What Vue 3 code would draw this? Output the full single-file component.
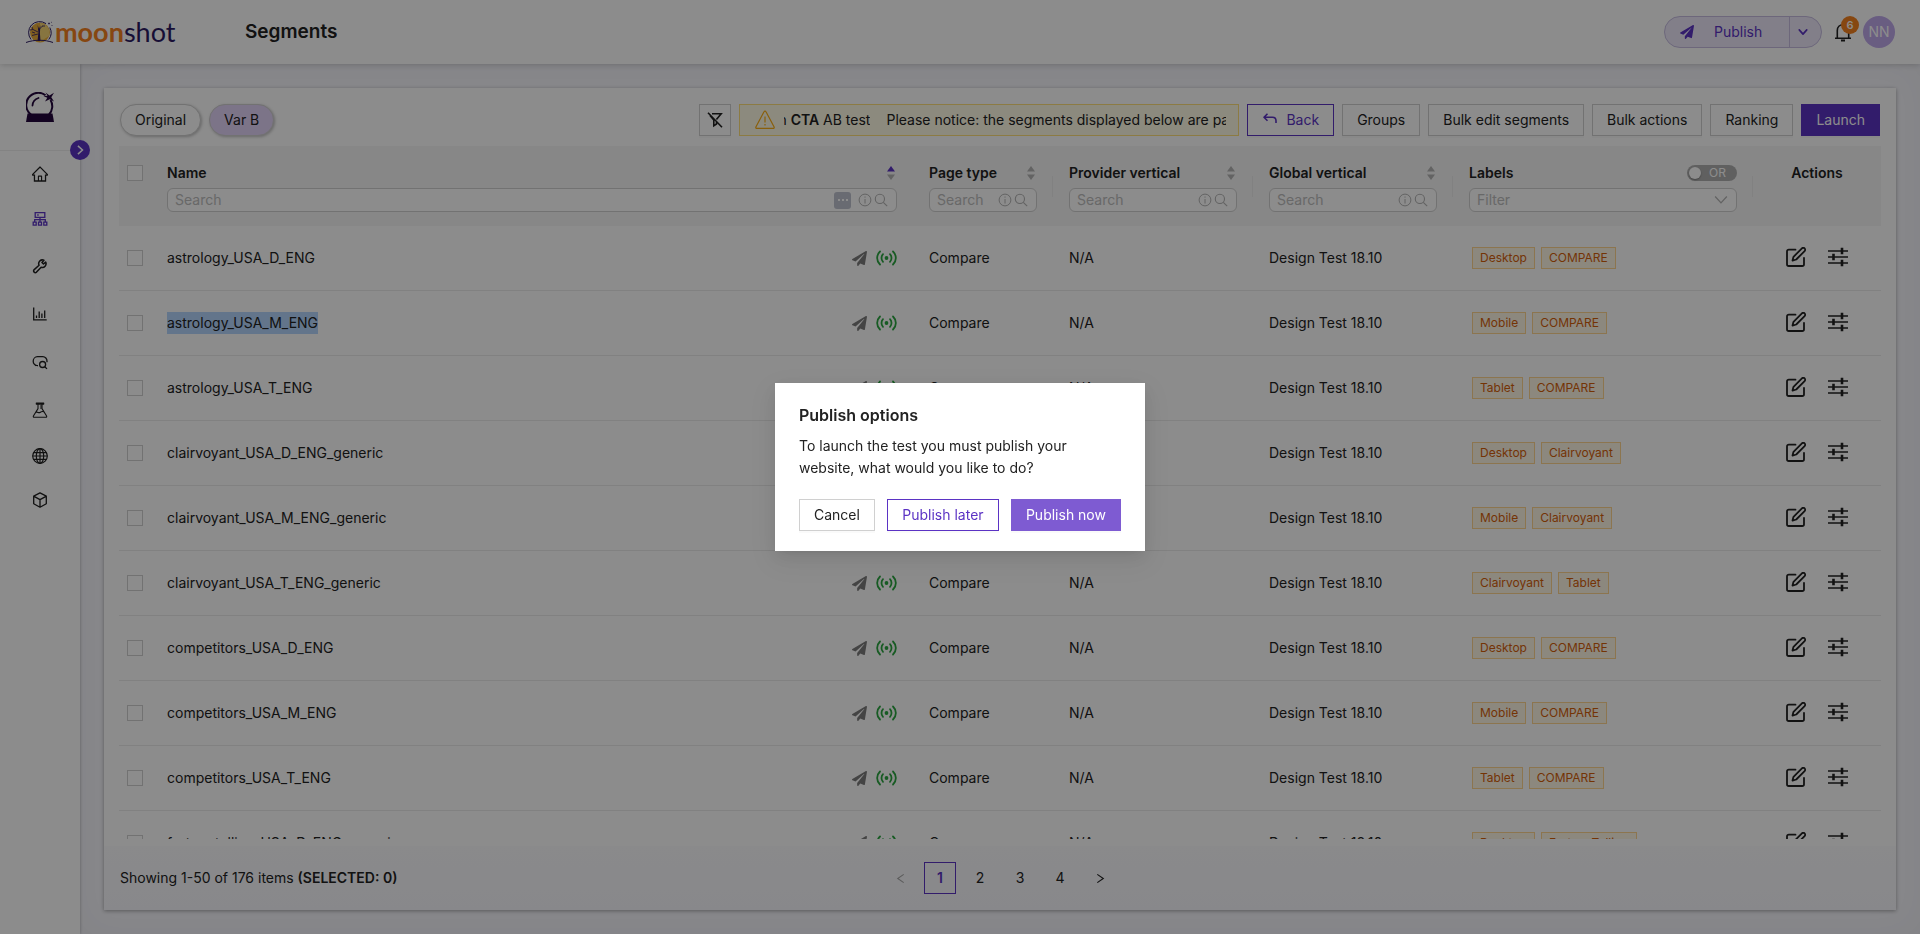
<script setup>
import { ref } from 'vue'

const navItems = [
  { icon: 'home', label: 'Home', cls: 'short' },
  { icon: 'sitemap', label: 'Segments', cls: 'short active' },
  { icon: 'wrench', label: 'Tools', cls: '' },
  { icon: 'chart', label: 'Reports', cls: '' },
  { icon: 'query', label: 'Queries', cls: '' },
  { icon: 'flask', label: 'Experiments', cls: '' },
  { icon: 'globe', label: 'Sites', cls: 'short' },
  { icon: 'cube', label: 'Products', cls: 'short' }
]

const searchColumns = [
  { key: 'name', title: 'Name', sorted: true },
  { key: 'page', title: 'Page type' },
  { key: 'provider', title: 'Provider vertical' },
  { key: 'global', title: 'Global vertical' }
]

const rows = [
  { name: 'astrology_USA_D_ENG', tags: ['Desktop', 'COMPARE'] },
  { name: 'astrology_USA_M_ENG', tags: ['Mobile', 'COMPARE'], highlighted: true },
  { name: 'astrology_USA_T_ENG', tags: ['Tablet', 'COMPARE'] },
  { name: 'clairvoyant_USA_D_ENG_generic', tags: ['Desktop', 'Clairvoyant'] },
  { name: 'clairvoyant_USA_M_ENG_generic', tags: ['Mobile', 'Clairvoyant'] },
  { name: 'clairvoyant_USA_T_ENG_generic', tags: ['Clairvoyant', 'Tablet'] },
  { name: 'competitors_USA_D_ENG', tags: ['Desktop', 'COMPARE'] },
  { name: 'competitors_USA_M_ENG', tags: ['Mobile', 'COMPARE'] },
  { name: 'competitors_USA_T_ENG', tags: ['Tablet', 'COMPARE'] },
  { name: 'fortunetelling_USA_D_ENG_generic', tags: ['Desktop', 'FortuneTelling'] }
]

const bulkButtons = ['Groups', 'Bulk edit segments', 'Bulk actions', 'Ranking']
const pages = [1, 2, 3, 4]
const current = ref(1)
</script>

<template>
  <div class="app">
    <svg class="sprite" aria-hidden="true">
      <symbol id="home" viewBox="64 64 896 896"><path fill="currentColor" d="M946.5 505L560.1 118.8l-25.9-25.9a31.5 31.5 0 00-44.4 0L77.5 505a63.9 63.9 0 00-18.8 46c.4 35.2 29.7 63.3 64.9 63.3h42.5V940h691.8V614.3h43.4c17.1 0 33.2-6.7 45.3-18.8a63.6 63.6 0 0018.7-45.3c0-17-6.7-33.1-18.8-45.2zM568 868H456V664h112v204zm217.9-325.7V868H632V640c0-22.1-17.9-40-40-40H432c-22.1 0-40 17.9-40 40v228H238.1V542.3h-96l370-369.7 23.1 23.1L882 542.3h-96.1z" /></symbol>
      <symbol id="sitemap" viewBox="0 0 16 16"><g fill="none" stroke="currentColor" stroke-width="1.3"><path d="M3.2 1.7h9.600v4.600H3.200zM8 6.300v4.400M2.700 11V8.700h10.600V11M1.200 11.200h3v3h-3zM6.500 11.200h3v3h-3zM11.800 11.200h3v3h-3zM5.200 4h1.500" /></g></symbol>
      <symbol id="wrench" viewBox="0 0 24 24"><path fill="none" stroke="currentColor" stroke-width="2.300" stroke-linejoin="round" d="M20.500 6.200l-3.300 2.800-2.200-2.200 2.900-3.400a5.600 5.600 0 0 0-7.300 7.500l-7.700 7a2.600 2.600 0 0 0 3.600 3.600l7.200-7.600a5.600 5.600 0 0 0 6.800-7.700z" /></symbol>
      <symbol id="chart" viewBox="0 0 16 16"><path fill="none" stroke="currentColor" stroke-width="1.300" d="M1.700 1.500v12.300h13M4.500 12V9.500M7.200 12V5.500M9.900 12V7.500M12.700 12V4.500" /></symbol>
      <symbol id="query" viewBox="0 0 16 16"><g fill="none" stroke="currentColor" stroke-width="1.300"><path d="M6 11.600H5.500A4.200 4.200 0 0 1 1.200 7.300 4.500 4.500 0 0 1 5.500 2.700h5.300a4.300 4.300 0 0 1 4.200 4.500v1M2.500 10.300l1.500 1.500" /><circle cx="10.600" cy="10.500" r="3" /><path d="M12.800 12.700l2.200 2.200" /></g></symbol>
      <symbol id="flask" viewBox="0 0 16 16"><g fill="none" stroke="currentColor" stroke-width="1.100" stroke-linejoin="round"><path d="M4.300 1h7.400v1.100H4.300zM6 2.400v4.200L1.400 14c-.3.700 0 1.200.700 1.200h11.800c.7 0 1-.5.700-1.200L10 6.600V2.400M4 10.400c1.500-1 2.500.9 4 .1 1.200-.9 2.500-1.200 3.700-.8M8 4h1.800M8 6h1.800" /></g></symbol>
      <symbol id="globe" viewBox="0 0 16 16"><g fill="none" stroke="currentColor" stroke-width="1.200"><circle cx="8" cy="8" r="7.300" /><ellipse cx="8" cy="8" rx="3.700" ry="7.300" /><path d="M8 .7v14.600M.7 8h14.600M1.600 4.600h12.800M1.600 11.400h12.800" /></g></symbol>
      <symbol id="cube" viewBox="0 0 16 16"><path fill="none" stroke="currentColor" stroke-width="1.300" stroke-linejoin="round" d="M8 .9l6.300 3.300v7.600L8 15.200l-6.300-3.400V4.200zM2 4.400l6 3.200 6-3.200M8 7.600v7.400" /></symbol>
      <symbol id="plane" viewBox="0 0 512 512"><path fill="currentColor" d="M476 3.200L12.500 270.600c-18.100 10.400-15.800 35.600 2.200 43.200L121 358.400l287.300-253.200c5.500-4.900 13.300 2.600 8.600 8.300L176 407v80.500c0 23.600 28.500 32.900 42.500 15.800L282 426l124.600 52.200c14.200 6 30.400-2.900 33-18.200l72-432C515 7.800 493.300-6.800 476 3.200z" /></symbol>
      <symbol id="live" viewBox="0 0 21 16"><g fill="none" stroke="currentColor" stroke-width="1.800" stroke-linecap="round"><path d="M4 1.500C.2 5.200.2 10.800 4 14.500M17 1.500c3.800 3.700 3.800 9.300 0 13M7 4.200C5 6.200 5 9.800 7 11.800M14 4.200c2 2 2 5.600 0 7.600" /></g><circle cx="10.500" cy="8" r="1.900" fill="currentColor" /></symbol>
      <symbol id="down" viewBox="0 0 12 12"><path fill="none" stroke="currentColor" stroke-width="1.100" d="M1 3l5 5.500L11 3" /></symbol>
      <symbol id="down-bold" viewBox="0 0 12 12"><path fill="none" stroke="currentColor" stroke-width="2" stroke-linecap="round" stroke-linejoin="round" d="M1.500 3.500L6 8.500l4.500-5" /></symbol>
      <symbol id="left" viewBox="0 0 12 12"><path fill="none" stroke="currentColor" stroke-width="1.200" d="M9.500 1.500L3 6l6.500 4.500" /></symbol>
      <symbol id="right" viewBox="0 0 12 12"><path fill="none" stroke="currentColor" stroke-width="1.300" d="M2.500 1.500L9 6l-6.500 4.500" /></symbol>
      <symbol id="chevron" viewBox="0 0 12 12"><path fill="none" stroke="currentColor" stroke-width="1.800" d="M3.500 1L9 6l-5.500 5" /></symbol>
      <symbol id="info" viewBox="0 0 14 14"><g fill="none" stroke="currentColor"><circle cx="7" cy="7" r="5.900" /><path d="M7 6v4.500M7 3.500v1.200" /></g></symbol>
      <symbol id="search" viewBox="0 0 14 14"><g fill="none" stroke="currentColor" stroke-width="1.100"><circle cx="5.900" cy="5.900" r="4.600" /><path d="M9.300 9.300l3.900 3.900" /></g></symbol>
      <symbol id="edit" viewBox="0 0 20 20"><g fill="none" stroke="currentColor" stroke-width="1.800" stroke-linecap="round" stroke-linejoin="round"><path d="M9.500 2.700H2.800c-1.100 0-1.800.7-1.800 1.800v12.700c0 1.100.7 1.800 1.800 1.800h13.400c1.100 0 1.800-.7 1.800-1.800v-6.400" /><path d="M6.500 13.600l1-3.800 8.400-8.400a1.800 1.800 0 0 1 2.700 2.700l-8.400 8.400z" /></g></symbol>
      <symbol id="sliders" viewBox="0 0 20 20"><path fill="none" stroke="currentColor" stroke-width="1.600" d="M0 4h20M0 10h20M0 16h20" /><path fill="none" stroke="currentColor" stroke-width="2.600" d="M14 .8v6.400M5.500 6.800v6.400M14 12.800v6.400" /></symbol>
      <symbol id="no-filter" viewBox="0 0 16 16"><g fill="none" stroke="currentColor" stroke-width="1.600"><path d="M1 .8l14 14.400M5 1.700h9.200L9.400 7.600M6.800 7.500v6.200l2.700-1.700V9.800M3 3.600l3.800 4.500" /></g></symbol>
      <symbol id="warning" viewBox="0 0 20 20"><g fill="none" stroke="currentColor" stroke-width="1.200" stroke-linejoin="round"><path d="M10 1.200c.5 0 .8.200 1 .6l8 14.900c.5.900.1 1.700-.9 1.700H1.900c-1 0-1.400-.8-.9-1.700L9 1.800c.2-.4.500-.6 1-.6z" /><path d="M10 6.500v6M10 14v1.500" /></g></symbol>
      <symbol id="back" viewBox="0 0 16 14"><path fill="none" stroke="currentColor" stroke-width="1.600" stroke-linejoin="round" d="M5.500 .8L2 4.300l3.500 3.500M2 4.300h8.500c2.300 0 3.500 1.200 3.500 3.500V10" /></symbol>
      <symbol id="bell" viewBox="0 0 18 20"><g fill="none" stroke="currentColor" stroke-width="1.600"><path d="M1 16.200h16M3.300 16V8.500C3.300 5 5.700 2.700 9 2.700s5.700 2.300 5.700 5.800V16M9 2.700V.8" /><path d="M7 18.500h4" stroke-width="2" /></g></symbol>
    </svg>

    <header class="topbar">
      <a class="brand" href="#" aria-label="moonshot">
        <svg class="moon" viewBox="0 0 27 22">
          <circle cx="14" cy="11.500" r="10" fill="#e9ad3b" />
          <path d="M14 2a10 10 0 0 1 9 13l-9 6z" fill="#f6d576" />
          <path d="M5 18.500A11.300 11.300 0 0 1 5.500 4 11.300 11.300 0 0 1 20 2.600M23.800 6.500a11.300 11.300 0 0 1-1 12M0 21.500c8-3 19-3 27 0" fill="none" stroke="#2d1b63" stroke-width="1" />
          <path d="M11.600 20l.8-9-.8-7 1.500 4 1.300-4-.5 8 .6 8z" fill="#2d1b63" />
          <path d="M12 11L7 8.500M12.500 9l4-4M12 13l-6 1.500M7 8.500L4 9M7 8.500L6 6M9 12l-3-1M16 5l3 0" stroke="#2d1b63" stroke-width=".8" />
          <path d="M23 1.500v2M22 2.500h2M26 4v1M25 1l.8.5" stroke="#2d1b63" stroke-width=".7" />
        </svg>
        <span class="word"><b>moon</b>shot</span>
      </a>
      <h1>Segments</h1>
      <div class="top-actions">
        <div class="publish">
          <button type="button" class="publish-main"><svg><use href="#plane" /></svg><span>Publish</span></button>
          <button type="button" class="publish-more" aria-label="More publish options"><svg><use href="#down-bold" /></svg></button>
        </div>
        <button type="button" class="bell" aria-label="Notifications"><svg><use href="#bell" /></svg><span class="badge">6</span></button>
        <button type="button" class="avatar">NN</button>
      </div>
    </header>

    <div class="body">
      <aside class="sidebar">
        <div class="site-logo">
          <svg viewBox="0 0 28 30">
            <path d="M1.500 21.500h25l1.500 8.500H0z" fill="#24063c" />
            <path d="M5 22.500A12 12 0 0 1 19.500 3.200M24.500 8a12 12 0 0 1-1.500 14.500" fill="none" stroke="#24063c" stroke-width="2" />
            <path d="M6.500 13.500a8.500 8.500 0 0 1 6-7.500" fill="none" stroke="#24063c" stroke-width="1.800" stroke-linecap="round" />
            <path d="M19.500 .5l4 3L28 .8l-2.700 4.400L28 9.500l-4.300-2.300L19 9.500l2.300-3.800-3.800-1.500 4-.4z" fill="#24063c" />
          </svg>
        </div>
        <button type="button" class="expand" aria-label="Expand menu"><svg><use href="#chevron" /></svg></button>
        <nav>
          <a v-for="n in navItems" :key="n.icon" href="#" :class="n.cls" :aria-label="n.label"><svg><use :href="'#' + n.icon" /></svg></a>
        </nav>
      </aside>

      <main>
        <section class="card">
          <div class="toolbar">
            <button type="button" class="pill">Original</button>
            <button type="button" class="pill on">Var B</button>
            <span class="spacer"></span>
            <button type="button" class="btn icon-btn" aria-label="Clear filters"><svg><use href="#no-filter" /></svg></button>
            <div class="alert">
              <svg><use href="#warning" /></svg>
              <p class="tail"><span>in <b>CTA</b> AB test</span></p>
              <p class="lead">Please notice: the segments displayed below are part</p>
            </div>
            <button type="button" class="btn outline"><svg><use href="#back" /></svg>Back</button>
            <button v-for="b in bulkButtons" :key="b" type="button" class="btn">{{ b }}</button>
            <button type="button" class="btn primary">Launch</button>
          </div>

          <div class="scroller">
            <table>
              <colgroup>
                <col class="c-check" /><col /><col class="c-page" /><col class="c-vert" /><col class="c-vert" /><col class="c-labels" /><col class="c-act" />
              </colgroup>
              <thead>
                <tr>
                  <th class="check"><input type="checkbox" aria-label="Select all" /></th>
                  <th v-for="c in searchColumns" :key="c.key" :class="{ sep: c.key !== 'name' }">
                    <div class="th-title">
                      <span>{{ c.title }}</span>
                      <svg class="sort" :class="{ sorted: c.sorted }" viewBox="0 0 8 14"><path class="up" d="M4 0l4 5.500H0z" /><path d="M4 14l4-5.500H0z" /></svg>
                    </div>
                    <div class="field">
                      <input type="text" placeholder="Search" :aria-label="'Search ' + c.title" />
                      <span v-if="c.sorted" class="autofill"><i></i><i></i><i></i></span>
                      <svg><use href="#info" /></svg>
                      <svg><use href="#search" /></svg>
                    </div>
                  </th>
                  <th class="sep">
                    <div class="th-title">
                      <span>Labels</span>
                      <button type="button" class="switch" role="switch" aria-checked="false"><i></i>OR</button>
                    </div>
                    <div class="field">
                      <input type="text" placeholder="Filter" aria-label="Filter labels" />
                      <svg><use href="#down" /></svg>
                    </div>
                  </th>
                  <th class="actions-head">Actions</th>
                </tr>
              </thead>
              <tbody>
                <tr v-for="r in rows" :key="r.name">
                  <td class="check"><input type="checkbox" :aria-label="'Select ' + r.name" /></td>
                  <td>
                    <div class="name">
                      <span :class="{ highlighted: r.highlighted }">{{ r.name }}</span>
                      <svg class="plane"><use href="#plane" /></svg>
                      <svg class="live"><use href="#live" /></svg>
                    </div>
                  </td>
                  <td>Compare</td>
                  <td>N/A</td>
                  <td>Design Test 18.10</td>
                  <td><div class="tags"><span v-for="t in r.tags" :key="t">{{ t }}</span></div></td>
                  <td>
                    <div class="row-actions">
                      <button type="button" aria-label="Edit"><svg><use href="#edit" /></svg></button>
                      <button type="button" aria-label="Settings"><svg><use href="#sliders" /></svg></button>
                    </div>
                  </td>
                </tr>
              </tbody>
            </table>
          </div>

          <footer>
            <p>Showing 1-50 of 176 items <b>(SELECTED: 0)</b></p>
            <div class="pager">
              <button type="button" class="prev" disabled aria-label="Previous page"><svg><use href="#left" /></svg></button>
              <button v-for="p in pages" :key="p" type="button" :class="{ current: p === current }" @click="current = p">{{ p }}</button>
              <button type="button" aria-label="Next page"><svg><use href="#right" /></svg></button>
            </div>
          </footer>
        </section>
      </main>
    </div>

    <div class="mask">
      <div class="modal" role="dialog" aria-modal="true" aria-labelledby="dlg-title">
        <h2 id="dlg-title">Publish options</h2>
        <p>To launch the test you must publish your website, what would you like to do?</p>
        <div class="modal-actions">
          <button type="button" class="btn">Cancel</button>
          <button type="button" class="btn outline">Publish later</button>
          <button type="button" class="btn primary light">Publish now</button>
        </div>
      </div>
    </div>
  </div>
</template>

<style>
body { margin: 0; overflow: hidden; }
</style>

<style scoped>
* { box-sizing: border-box; }
.app {
  height: 100vh; display: flex; flex-direction: column; background: #fff;
  color: #222; font: 14px/22px Inter, "Liberation Sans", sans-serif;
}
.sprite { display: none; }
button, input { font: inherit; color: inherit; }
button { border: 0; padding: 0; background: none; cursor: pointer; }
svg { flex: none; }
p, h1, h2 { margin: 0; }
b { font-weight: 600; }

.topbar {
  height: 64px; flex: none; display: flex; align-items: center; padding: 0 24px 0 26px; position: relative; z-index: 2;
  background: #fff; box-shadow: 0 1px 6px rgba(0, 0, 0, .18);
}
.brand { display: flex; align-items: center; width: 219px; text-decoration: none; color: #2d1b63; }
.moon { width: 27px; height: 22px; }
.word { font: 400 27px/32px Lato, sans-serif; margin-left: 2px; }
.word b { font-weight: 700; color: #f5821f; }
h1 { font-size: 19px; line-height: 28px; font-weight: 600; }
.top-actions { margin-left: auto; display: flex; align-items: center; }
.publish { display: flex; height: 32px; border: 1px solid #c6bce0; border-radius: 16px; background: #ede8fa; color: #5b33c4; overflow: hidden; }
.publish-main { width: 124px; display: flex; align-items: center; padding-left: 15px; }
.publish-main span { margin-left: 20px; }
.publish-main svg { width: 14px; height: 14px; }
.publish-more { width: 32px; border-left: 1px solid #c6bce0; display: grid; place-items: center; padding-right: 5px; }
.publish-more svg { width: 10px; height: 10px; }
.bell { position: relative; width: 18px; height: 20px; margin: 0 11px 0 12px; }
.bell svg { width: 18px; height: 20px; display: block; }
.badge {
  position: absolute; top: -6px; left: 7px; width: 18px; height: 18px; border-radius: 9px;
  background: #f5821f; color: #fff; font-size: 11px; line-height: 18px; font-weight: 600;
}
.avatar { width: 32px; height: 32px; border-radius: 50%; background: #c0a9ec; color: #fff; margin-right: 1px; }

.body { flex: 1; min-height: 0; display: flex; }
.sidebar { width: 80px; flex: none; position: relative; z-index: 1; background: #fff; box-shadow: 0 0 3px rgba(0, 0, 0, .3); }
.site-logo { height: 87px; border-bottom: 1px solid #eee; display: grid; place-items: center; }
.site-logo svg { width: 28px; height: 30px; }
.expand { position: absolute; top: 76px; right: -10px; width: 20px; height: 20px; border-radius: 50%; background: #5b33c4; color: #fff; display: grid; place-items: center; }
.expand svg { width: 10px; height: 10px; }
nav { padding-top: 1px; }
nav a { height: 48px; display: grid; place-items: center; color: #1f1f1f; }
nav a.short { height: 44px; }
nav a.active { height: 46px; color: #5b33c4; }
nav svg { width: 16px; height: 16px; }

main { flex: 1; min-width: 0; padding: 24px; background: #f8f8fd; box-shadow: inset 0 0 40px rgba(40, 40, 60, .05); }
.card { height: 100%; display: flex; flex-direction: column; background: #fff; box-shadow: 0 1px 4px rgba(0, 0, 0, .35); }
.toolbar { display: flex; gap: 8px; padding: 16px 16px 10px; }
.pill { height: 32px; padding: 0 14px; border: 1px solid #cfcfcf; border-radius: 16px; background: #fff; box-shadow: 1px 1px 3px rgba(0, 0, 0, .25); }
.pill.on { background: #e2d3f7; }
.spacer { flex: 1; }
.btn {
  height: 32px; padding: 0 14px; border: 1px solid #d0d0d0; background: #fff; white-space: nowrap;
  box-shadow: 0 2px 0 rgba(0, 0, 0, .02); display: flex; align-items: center; justify-content: center;
}
.btn.outline { border-color: #5b33c4; color: #5b33c4; }
.btn.primary { border-color: #5b33c4; background: #5b33c4; color: #fff; }
.btn.primary.light { border-color: #7e5bd2; background: #7e5bd2; }
.btn svg { width: 16px; height: 14px; margin-right: 8px; }
.icon-btn { width: 28px; padding: 0; }
.icon-btn svg { width: 16px; height: 16px; margin: 0; }
.toolbar .icon-btn { width: 32px; }
.alert { width: 500px; height: 32px; border: 1px solid #ffe07a; background: #fffbe6; display: flex; align-items: center; padding: 0 12px 0 15px; }
.alert svg { width: 20px; height: 20px; margin-right: 9px; color: #faad14; }
.alert p { white-space: nowrap; overflow: hidden; }
.tail { width: 86px; flex: none; display: flex; justify-content: flex-end; }
.lead { flex: 1; margin-left: 16px; }

.scroller { flex: 1; min-height: 0; overflow: hidden; margin: 0 15px 7px; }
table { width: 100%; table-layout: fixed; border-collapse: separate; border-spacing: 0; }
.c-check { width: 32px; }
.c-page { width: 140px; }
.c-vert { width: 200px; }
.c-labels { width: 300px; }
.c-act { width: 128px; }
th { height: 80px; padding: 16px 16px 14px; background: #f6f6f6; text-align: left; vertical-align: top; font-weight: 600; position: relative; }
td { height: 65px; padding: 0 16px; border-bottom: 1px solid #ebebeb; }
.check { padding-left: 8px; padding-right: 8px; }
.check input { appearance: none; display: block; width: 16px; height: 16px; margin: 0; border: 1px solid #d0d0d0; background: #fff; }
th.check { padding-top: 19px; }
th.sep::after { content: ""; position: absolute; right: 0; top: 30px; height: 21px; width: 1px; background: #ececec; }
.th-title { display: flex; justify-content: space-between; align-items: center; height: 22px; margin-bottom: 4px; }
.sort { width: 8px; height: 14px; margin-right: 2px; fill: #b4b4b4; }
.sort.sorted .up { fill: #5b33c4; }
.field { height: 24px; display: flex; align-items: center; gap: 2px; padding: 0 8px 0 7px; border: 1px solid #d0d0d0; border-radius: 6px; background: #fff; }
.field input { flex: 1; min-width: 0; height: 20px; border: 0; padding: 0; outline: 0; background: none; font-weight: 400; }
.field input::placeholder { color: #bdbdbd; opacity: 1; }
.field svg { width: 14px; height: 14px; color: #b4b4b4; }
.autofill { width: 17px; height: 17px; border-radius: 3px; margin-right: 5px; background: #c0c4d0; display: flex; align-items: center; justify-content: center; gap: 2px; }
.autofill i { width: 2px; height: 2px; background: #fff; }
.switch { width: 50px; height: 16px; border-radius: 8px; background: #b0b0b0; color: #fff; font-size: 12px; line-height: 16px; font-weight: 400; display: flex; align-items: center; gap: 8px; padding-left: 2px; }
.switch i { width: 12px; height: 12px; border-radius: 50%; background: #fff; box-shadow: 0 1px 2px rgba(0, 0, 0, .3); }
th.actions-head { text-align: center; }
.name { display: flex; align-items: center; }
.highlighted { background: #b4d5fe; }
.plane { width: 15px; height: 15px; margin-left: auto; color: #7d7d7d; }
.live { width: 21px; height: 16px; margin-left: 9px; color: #2ba640; }
.tags { display: flex; gap: 6px; padding-left: 3px; }
.tags span { border: 1px solid #ffd591; background: #fff7e6; color: #d4600a; font-size: 12px; line-height: 20px; padding: 0 7px; white-space: nowrap; }
.row-actions { display: flex; justify-content: center; gap: 22px; padding-bottom: 2px; }
.row-actions svg { width: 20px; height: 20px; display: block; }

footer { height: 64px; flex: none; display: grid; grid-template-columns: 1fr auto 1fr; align-items: center; padding: 0 16px; background: linear-gradient(#fbfbfd, #f8f8fd); }
.pager { display: flex; gap: 8px; }
.pager button { width: 32px; height: 32px; display: grid; place-items: center; }
.pager svg { width: 11px; height: 11px; }
.pager .prev { color: #a8a8a8; }
.pager .current { border: 1px solid #5b33c4; color: #5b33c4; font-weight: 600; }

.mask { position: fixed; inset: 0; z-index: 10; background: rgba(0, 0, 0, .45); display: flex; align-items: center; justify-content: center; }
.modal { width: 370px; padding: 20px 24px; background: #fff; box-shadow: 0 3px 6px -4px rgba(0, 0, 0, .12), 0 6px 16px rgba(0, 0, 0, .08), 0 9px 28px 8px rgba(0, 0, 0, .05); }
.modal h2 { font-size: 16px; line-height: 24px; font-weight: 600; margin-bottom: 8px; }
.modal p { padding-right: 32px; }
.modal-actions { display: flex; justify-content: space-between; margin-top: 20px; }
</style>
